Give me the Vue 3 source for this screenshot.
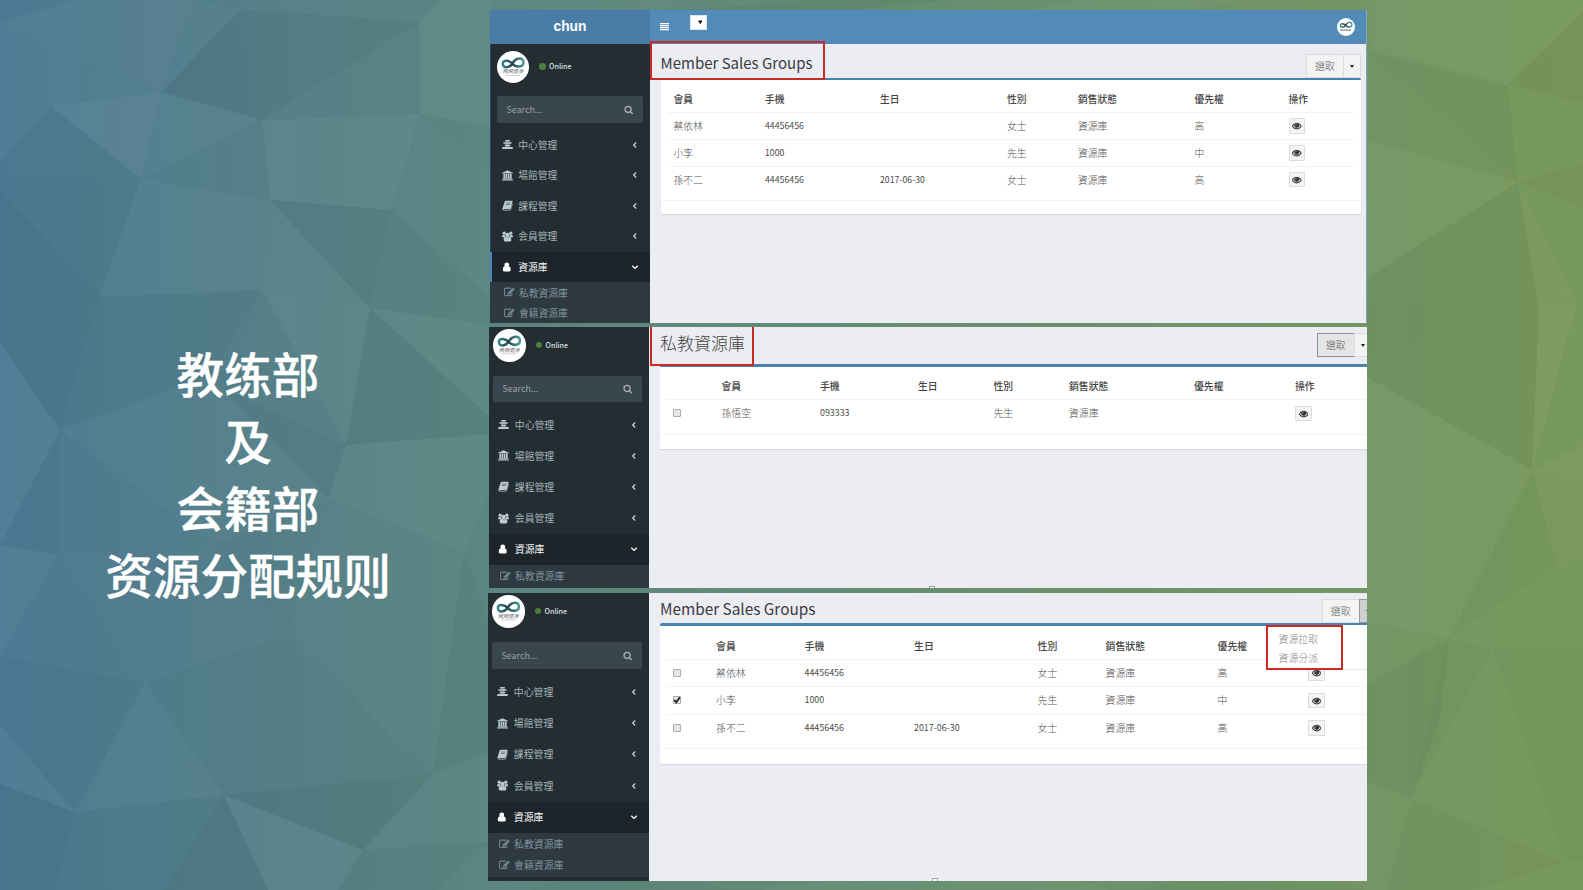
<script setup>
const menu = [
  { icon: 'center', label: '中心管理' },
  { icon: 'bank', label: '場館管理' },
  { icon: 'book', label: '課程管理' },
  { icon: 'users', label: '会員管理' },
  { icon: 'user', label: '資源庫', active: true },
]

const heads = ['會員', '手機', '生日', '性別', '銷售狀態', '優先權', '操作']
const members = [
  ['蔡依林', '44456456', '', '女士', '資源庫', '高'],
  ['小李', '1000', '', '先生', '資源庫', '中'],
  ['孫不二', '44456456', '2017-06-30', '女士', '資源庫', '高'],
]

const panels = [
  { id: 'p1', title: 'Member Sales Groups', bar: true, subs: ['私教資源庫', '會籍資源庫'], heads, rows: members, mark: true },
  {
    id: 'p2', title: '私教資源庫', subs: ['私教資源庫'], heads, checks: [false],
    rows: [['孫悟空', '093333', '', '先生', '資源庫', '']], mark: true, handle: true,
  },
  {
    id: 'p3', title: 'Member Sales Groups', subs: ['私教資源庫', '會籍資源庫'], heads: heads.slice(0, 6), checks: [false, true, false],
    rows: members, dropdown: ['資源拉取', '資源分派'], handle: true,
  },
]

const isLatin = (s) => /^[\d-]+$/.test(s)

const facets = [
  ['w', 0.05, '0,23 75,0 195,0 161,92'],
  ['w', 0.03, '195,0 241,9 161,92'],
  ['k', 0.05, '241,9 161,92 262,120'],
  ['k', 0.035, '241,9 419,22 262,120'],
  ['w', 0.02, '236,0 442,0 419,22 241,9'],
  ['w', 0.01, '262,120 419,22 420,114'],
  ['w', 0.06, '419,22 442,0 490,0 490,128 420,114'],
  ['w', 0.035, '0,23 161,92 51,106 0,162'],
  ['w', 0.08, '51,106 161,92 141,179'],
  ['w', 0.045, '161,92 262,120 141,179'],
  ['w', 0.01, '141,179 262,120 270,200'],
  ['w', 0.065, '262,120 420,114 391,210 270,200'],
  ['w', 0.03, '420,114 490,172 490,297 391,210'],
  ['k', 0.01, '51,106 141,179 0,176 0,162'],
  ['k', 0.02, '0,176 141,179 99,297 0,190'],
  ['k', 0.06, '0,190 99,297 0,303'],
  ['w', 0.045, '141,179 270,200 262,290 99,297'],
  ['k', 0.035, '270,200 391,210 370,308'],
  ['w', 0.055, '270,200 370,308 262,290'],
  ['k', 0.01, '391,210 490,297 490,325 370,308'],
  ['k', 0.025, '99,297 262,290 220,360 210,376 60,430'],
  ['k', 0.05, '0,303 99,297 60,430 0,343'],
  ['w', 0.045, '0,343 60,430 0,545'],
  ['w', 0.065, '262,290 370,308 346,445'],
  ['w', 0.01, '262,290 346,445 220,388'],
  ['k', 0.035, '370,308 490,417 490,434 346,445'],
  ['w', 0.055, '370,308 490,325 490,417'],
  ['w', 0.035, '60,430 210,376 280,445 328,498 213,545'],
  ['k', 0.035, '220,388 346,445 328,498'],
  ['k', 0.03, '60,430 58,555 0,545'],
  ['w', 0.055, '346,445 490,434 490,490 464,552 328,498'],
  ['w', 0.05, '0,545 58,555 0,656'],
  ['w', 0.015, '58,555 213,545 287,635 145,683'],
  ['w', 0.02, '328,498 464,552 433,774 287,635'],
  ['k', 0.03, '464,552 488,622 488,752 433,774'],
  ['k', 0.03, '0,656 145,683 75,812 0,725'],
  ['w', 0.035, '145,683 224,795 75,812'],
  ['k', 0.01, '145,683 287,635 433,774 224,795'],
  ['w', 0.035, '0,725 75,812 0,784'],
  ['k', 0.06, '0,784 75,812 56,890 0,890'],
  ['k', 0.02, '75,812 224,795 164,890 56,890'],
  ['k', 0.06, '224,795 164,890 268,890'],
  ['w', 0.05, '224,795 363,850 338,890 268,890'],
  ['k', 0.06, '224,795 433,774 363,850'],
  ['w', 0.03, '433,774 490,752 490,842 363,850'],
  ['k', 0.02, '363,850 490,842 437,890 338,890'],
  ['w', 0.03, '490,0 690,0 660,12 490,9'],
  ['k', 0.05, '660,12 820,0 950,0 830,12'],
  ['w', 0.04, '1080,0 1250,0 1180,12 1020,12'],
  ['k', 0.03, '560,881 690,881 730,890 530,890'],
  ['w', 0.04, '820,881 1080,881 1110,890 760,890'],
  ['k', 0.03, '1180,881 1340,881 1367,890 1140,890'],
  ['w', 0.03, '1367,0 1583,0 1583,12 1508,85 1371,51'],
  ['k', 0.04, '1371,51 1508,85 1518,182 '],
  ['k', 0.02, '1371,51 1518,182 1367,140'],
  ['k', 0.04, '1508,85 1583,12 1583,103'],
  ['k', 0.035, '1518,182 1583,164 1583,208'],
  ['w', 0.035, '1367,140 1518,182 1367,278'],
  ['k', 0.04, '1367,278 1518,182 1539,310 1367,297'],
  ['k', 0.055, '1367,297 1539,310 1367,355'],
  ['k', 0.04, '1367,355 1539,310 1532,470 1367,377'],
  ['w', 0.035, '1518,182 1577,302 1539,310'],
  ['w', 0.055, '1539,310 1577,302 1532,470'],
  ['w', 0.04, '1367,377 1532,470 1449,638 1367,622'],
  ['w', 0.05, '1532,470 1583,445 1583,483'],
  ['w', 0.025, '1532,470 1583,483 1583,558 1557,565'],
  ['k', 0.03, '1532,470 1557,565 1449,638'],
  ['k', 0.05, '1449,638 1367,684 1367,782 1411,798 1440,720'],
  ['k', 0.03, '1449,638 1493,648 1411,798'],
  ['k', 0.03, '1493,648 1583,648 1583,862 1564,862'],
  ['k', 0.035, '1411,798 1564,862 1480,890 1387,890'],
]
</script>

<template>
  <div class="slide">
    <svg class="backdrop" viewBox="0 0 1583 890">
      <defs>
        <linearGradient id="sky" x1="0" x2="1" y1="0" y2="0">
          <stop offset="0" stop-color="#4e7994" />
          <stop offset=".06" stop-color="#4f7b8f" />
          <stop offset=".15" stop-color="#537e89" />
          <stop offset=".3" stop-color="#5a8581" />
          <stop offset=".6" stop-color="#678e70" />
          <stop offset=".86" stop-color="#749665" />
          <stop offset="1" stop-color="#78995c" />
        </linearGradient>
        <linearGradient id="loop" x1="0" x2="1" y1="0" y2="0">
          <stop offset="0" stop-color="#2f8488" />
          <stop offset=".45" stop-color="#24454e" />
          <stop offset="1" stop-color="#4a9a98" />
        </linearGradient>
      </defs>
      <rect width="1583" height="890" fill="url(#sky)" />
      <polygon v-for="(f, i) in facets" :key="i" :points="f[2]" :fill="f[0] === 'w' ? '#fff' : '#000'" :fill-opacity="f[1] * 0.7" />
    </svg>

    <h1 class="caption">
      <span>教练部</span><span>及</span><span>会籍部</span><span>资源分配规则</span>
    </h1>

    <div class="stack">
      <section v-for="p in panels" :key="p.id" class="panel" :class="p.id">
        <header v-if="p.bar" class="topbar">
          <div class="brand">chun</div>
          <div class="nav">
            <svg class="burger" viewBox="0 0 9 8"><path d="M0 .6h9M0 2.600h9M0 4.600h9M0 6.600h9" stroke="#fff" stroke-width="1.100" /></svg>
            <span class="lang"><svg viewBox="0 0 5 5"><path d="M0 .5h5L2.500 4.800z" fill="#111" /></svg></span>
            <span class="user"><svg viewBox="0 0 32 32"><path d="M15.500 12.500C13 16.800 6 18 6 13.200 6 8.600 12.500 9.500 15.500 13 19 17.400 26.500 16.800 26.500 11.500 26.500 6.500 19 6.300 15.500 12.500z" fill="none" stroke="url(#loop)" stroke-width="2.600" /><path d="M6 21.500h20" stroke="#999" stroke-width="3" stroke-dasharray="4 1" /></svg></span>
          </div>
        </header>

        <div class="body">
          <aside class="side">
            <div class="me">
              <div class="logo">
                <svg viewBox="0 0 32 32">
                  <path d="M15.500 12.300C13 16.800 5.800 18 5.800 12.800 5.800 8.200 12.500 9.300 15.500 12.800 19 17 26.500 16.500 26.500 11.200 26.500 6.200 19 6.100 15.500 12.300z" fill="none" stroke="url(#loop)" stroke-width="2.500" />
                  <path d="M9 24.500h14" stroke="#c9b8b0" stroke-width=".7" />
                </svg>
                <em>飛飛健身</em>
              </div>
              <i class="dot"></i><b>Online</b>
            </div>
            <div class="search">
              <span>Search...</span>
              <svg viewBox="0 0 1792 1792"><path fill="#a5b0b5" d="M1216 832q0-185-131.500-316.500t-316.500-131.500-316.500 131.500-131.500 316.500 131.500 316.500 316.500 131.500 316.500-131.500 131.500-316.500zm512 832q0 52-38 90t-90 38q-54 0-90-38l-343-342q-179 124-399 124-143 0-273.500-55.500t-225-150-150-225-55.500-273.500 55.500-273.500 150-225 225-150 273.500-55.500 273.500 55.500 225 150 150 225 55.500 273.500q0 220-124 399l343 343q37 37 37 90z" /></svg>
            </div>
            <nav>
              <div v-for="m in menu" :key="m.icon" class="item" :class="{ active: m.active }">
                <svg class="ic" viewBox="0 0 12 12" fill="currentColor">
                  <g v-if="m.icon === 'center'"><path d="M3.500 1h5v1.700h-5zM1.600 3.600h8.800v1.700H1.600zM3 6.200h6v1.700H3zM.3 8.800h11.400v2H.3z" /><path opacity=".45" d="M4 2.700h4v6.200H4z" /></g>
                  <g v-else-if="m.icon === 'bank'"><path d="M6 .4l5.800 2.500v1H.2v-1zM1.500 4.300h1.900v4.400H1.500zM4 4.300h1.700v4.400H4zM6.300 4.300H8v4.400H6.300zM8.600 4.300h1.900v4.400H8.600zM.9 9h10.200v1H.9zM.1 10.300h11.800v1.200H.1z" /></g>
                  <g v-else-if="m.icon === 'book'"><path fill-rule="evenodd" d="M4 .8h7q.8.200.5 1.100L9.500 9q-.2.700-1 .7H2.200q-.7 0-.6.500t.7.500h6.200q.8 0 1-.8l1.900-6.200q.5.300.3 1l-1.900 5.900q-.3.900-1.200.9H2.200Q.3 11.400.5 9.300L2.800 2Q3.200.8 4 .8zM4.700 3l-.2.600h4.600l.2-.6zM4.200 4.800l-.2.600h4.500l.2-.6z" /></g>
                  <g v-else-if="m.icon === 'users'"><circle cx="2.400" cy="2.400" r="1.800" /><circle cx="9.600" cy="2.400" r="1.800" /><circle cx="6" cy="4.300" r="2.400" /><path d="M0 6.900q0-2.600 1.200-2.700l2 .4Q3.200 6 4 6.900zM12 6.900q0-2.600-1.200-2.700l-2 .4Q8.800 6 8 6.900zM1.800 9.800q0-3.400 2.200-3.500 2 1.200 4 0 2.200.1 2.200 3.500 0 1.600-1.500 1.600H3.300Q1.800 11.400 1.800 9.800z" /></g>
                  <g v-else><circle cx="6" cy="3.500" r="3.100" /><path d="M.9 9.500q0-3.700 2.500-4.300 2.600 2.400 5.200 0 2.500.6 2.500 4.300 0 2.100-1.800 2.100H2.700Q.9 11.600.9 9.500z" /></g>
                </svg>
                <span>{{ m.label }}</span>
                <svg class="chev" viewBox="0 0 8 8"><path :d="m.active ? 'M1.300 2.700L4 5.400l2.700-2.700' : 'M5.200 1.500L2.700 4l2.500 2.500'" fill="none" stroke="currentColor" stroke-width="1.300" /></svg>
              </div>
            </nav>
            <div class="subs">
              <div v-for="s in p.subs" :key="s" class="sub">
                <svg viewBox="0 0 1792 1792"><path fill="currentColor" stroke="currentColor" stroke-width="50" d="M888 1184l116-116-152-152-116 116v56h96v96h56zm440-720q-16-16-33 1l-350 350q-17 17-1 33t33-1l350-350q17-17 1-33zm80 594v190q0 119-84.500 203.500t-203.500 84.500h-832q-119 0-203.500-84.500t-84.500-203.500v-832q0-119 84.500-203.500t203.500-84.500h832q63 0 117 25 15 7 18 23 3 17-9 29l-49 49q-14 14-32 8-23-6-45-6h-832q-66 0-113 47t-47 113v832q0 66 47 113t113 47h832q66 0 113-47t47-113v-126q0-13 9-22l64-64q15-15 35-7t20 29zm-96-738l288 288-672 672h-288v-288zm444 132l-92 92-288-288 92-92q28-28 68-28t68 28l152 152q28 28 28 68t-28 68z" /></svg>
                <span>{{ s }}</span>
              </div>
            </div>
          </aside>

          <main class="main">
            <div class="head">
              <h2>{{ p.title }}</h2>
              <div class="btns">
                <button class="pick">選取</button>
                <button class="caret"><i></i></button>
              </div>
            </div>
            <div class="box">
              <div class="row th">
                <span v-if="p.checks"></span>
                <span v-for="h in p.heads" :key="h">{{ h }}</span>
              </div>
              <div v-for="(r, ri) in p.rows" :key="ri" class="row">
                <span v-if="p.checks" class="ck"><i><svg v-if="p.checks[ri]" viewBox="0 0 8 8"><path d="M1.300 4l1.900 2.200L6.900 1.200" fill="none" stroke="#222" stroke-width="1.800" /></svg></i></span>
                <span v-for="(c, ci) in r" :key="ci" :class="{ latin: isLatin(c) }">{{ c }}</span>
                <span class="eye"><svg viewBox="0 0 1792 1792"><path fill="#333" stroke="#333" stroke-width="60" d="M1664 960q-152-236-381-353 61 104 61 225 0 185-131.500 316.500t-316.500 131.500-316.500-131.500-131.500-316.500q0-121 61-225-229 117-381 353 133 205 333.500 326.500t434.500 121.500 434.500-121.500 333.500-326.500zm-720-384q0-20-14-34t-34-14q-125 0-214.500 89.500t-89.500 214.500q0 20 14 34t34 14 34-14 14-34q0-86 61-147t147-61q20 0 34-14t14-34zm848 384q0 34-20 69-140 230-376.500 368.500t-499.500 138.500-499.500-139-376.500-368q-20-35-20-69t20-69q140-229 376.500-368t499.500-139 499.500 139 376.500 368q20 35 20 69z" /></svg></span>
              </div>
              <div class="foot"></div>
            </div>
            <div v-if="p.dropdown" class="drop">
              <div class="dropin"><span v-for="d in p.dropdown" :key="d">{{ d }}</span></div>
            </div>
            <i v-if="p.mark" class="mark"></i>
            <i v-if="p.handle" class="handle"></i>
          </main>
        </div>
      </section>
    </div>
  </div>
</template>

<style>
body { margin: 0; overflow: hidden; }
</style>

<style scoped>
* { box-sizing: border-box; }
.slide {
  position: relative; display: flex; width: 1583px; height: 890px; overflow: hidden;
  font-family: "Noto Sans CJK TC", "Noto Sans", sans-serif;
}
.backdrop { position: absolute; inset: 0; width: 1583px; height: 890px; }
.caption {
  position: relative; width: 488px; flex: none; margin: 0; padding: 339px 0 0 8px;
  display: flex; flex-direction: column; align-items: center;
  font: 500 47.600px/67px "Noto Sans CJK SC", sans-serif; color: #fff; -webkit-text-stroke: .4px #fff;
}
.stack { position: relative; width: 879px; padding-top: 9.500px; display: flex; flex-direction: column; align-items: flex-end; }
.panel { display: flex; flex-direction: column; overflow: hidden; flex: none; background: #ecedf3; }
.p1 {
  width: 877px; height: 313.500px; margin-bottom: 4px; border-right: 1px solid #7fa3cb;
  --fs: 9.750px; --side: 160px; --me: 52.500px; --ml: 7px; --mt: 7px; --item: 30.600px; --sub: 20.500px; --nt: 6.800px;
  --padl: 10.500px; --headh: 34px; --bt: 2.500px; --pt: 7px; --thh: 25.500px; --rh: 26.900px; --lat: 8.750px; --tfs: 15px;
  --cols: 91.500px 115px 127px 71px 116.500px 94px 1fr; --boxr: 5px; --in: 7px; --ind: 6px; --fh: 14.500px;
  --logo: 32px; --dotx: 10px; --icx: 4.500px;
}
.p2 {
  width: 878px; height: 261px; margin-bottom: 5px;
  --fs: 9.850px; --side: 160px; --me: 48.500px; --ml: 4px; --mt: 2px; --item: 31.200px; --sub: 22px; --nt: 7px;
  --padl: 11px; --headh: 36.500px; --bt: 3px; --pt: 7px; --thh: 25.500px; --rh: 27.500px; --lat: 8.850px; --tfs: 17px;
  --cols: 48.500px 98.500px 98px 75.500px 75.500px 125px 101px 1fr; --boxr: 0px; --in: 7px; --ind: 6px; --fh: 15.500px;
  --logo: 32.500px; --dotx: 10px; --icx: 5px;
}
.p3 {
  width: 879px; height: 288px;
  --fs: 9.900px; --side: 161px; --me: 49px; --ml: 4px; --mt: 2px; --item: 31.400px; --sub: 21.700px; --nt: 7.500px;
  --padl: 11px; --headh: 29.500px; --bt: 3px; --pt: 7px; --thh: 26px; --rh: 27.600px; --lat: 8.900px; --tfs: 15.350px;
  --cols: 43px 88.500px 109.500px 123.500px 68px 112px 90.500px 1fr; --boxr: 0px; --in: 7px; --ind: 6px; --fh: 15.500px;
  --logo: 32.500px; --dotx: 10px; --icx: 5px;
}
.topbar { display: flex; height: 34px; flex: none; }
.brand { width: 160px; background: #497da8; color: #fff; font: bold 13.800px/33px "Liberation Sans", Arial, sans-serif; text-align: center; }
.nav { flex: 1; display: flex; align-items: flex-start; background: #528ab8; }
.burger { width: 9px; height: 8px; margin: 13px 0 0 10px; }
.lang { width: 16.500px; height: 15px; margin: 5.500px 0 0 21px; background: #fff; border: 1px solid #dfe5ea; display: flex; justify-content: flex-end; padding: 4px 3.500px 0 0; }
.lang svg { width: 4.500px; height: 4.500px; }
.user { width: 18px; height: 18px; border-radius: 50%; background: #fff; margin: 8px 11.500px 0 auto; }
.user svg { width: 18px; height: 18px; display: block; }

.body { flex: 1; display: flex; min-height: 0; }
.side { width: var(--side); flex: none; background: #242d32; color: #a6b4bb; font-size: var(--fs); overflow: hidden; }
.p1 .side { box-shadow: inset 1px 0 #1e4a6b; }
.me { height: var(--me); padding: var(--mt) 0 0 var(--ml); display: flex; align-items: flex-start; }
.logo { position: relative; width: var(--logo); height: var(--logo); border-radius: 50%; background: #fff; flex: none; }
.logo svg { display: block; width: 100%; height: 100%; }
.logo em { position: absolute; left: 0; width: 100%; top: 16.500px; text-align: center; font-size: 5.200px; line-height: 8px; color: #666; }
.dot { width: 6.500px; height: 6.500px; border-radius: 50%; background: #4a8040; margin: 12.500px 3.500px 0 var(--dotx); }
.me b { font-size: 7.200px; line-height: 12px; margin-top: 9.500px; color: #dde2e4; font-weight: 500; }
.search {
  margin: 0 7px 0 var(--ml); height: 26.500px; border-radius: 2px; background: #3a464d; color: #98a2a7;
  display: flex; align-items: center; justify-content: space-between; padding: 0 9.500px; font-size: 8.900px;
}
.search svg { width: 9.500px; height: 9.500px; }
nav { padding-top: var(--nt); }
.item { height: var(--item); display: flex; align-items: center; padding-left: calc(var(--ml) + var(--icx)); line-height: 14px; }
.ic { width: 11px; height: 11px; margin-right: 5.800px; color: #bccad1; }
.chev { width: 8px; height: 8px; margin: 0 11.500px 0 auto; color: #c4d0d6; }
.active { background: #1d252a; color: #f4f6f7; }
.active .ic, .active .chev { color: #fff; }
.active .ic { width: 9.500px; height: 10px; margin-right: 7.300px; }
.p1 .active { box-shadow: inset 2px 0 #4a86b8; }
.subs { background: #2e3940; color: #7d929c; height: 100%; }
.p3 .subs { height: 44px; }
.sub { height: var(--sub); display: flex; align-items: center; padding-left: calc(var(--ml) + 7px); }
.sub svg { width: 10.500px; height: 10.500px; margin-right: 4.500px; }

.main { position: relative; flex: 1; min-width: 0; padding-left: var(--padl); }
.head { height: var(--headh); display: flex; justify-content: space-between; }
h2 { margin: 0; font-weight: 400; font-size: var(--tfs); line-height: 24px; color: #3b3b3f; white-space: nowrap; }
.p1 h2 { padding-top: 7.500px; }
.p2 h2 { padding-top: 4px; font-weight: 300; color: #444; }
.p3 h2 { padding-top: 3px; }
.btns { display: flex; height: 24px; }
.p1 .btns { margin: 10.500px 5px 0 0; }
.p2 .btns { margin: 6px -5px 0 0; }
.p3 .btns { margin: 6px -10px 0 0; }
button { font-family: inherit; font-size: var(--fs); padding: 0; border: 1px solid #dcdcdf; background: #f3f3f4; color: #5c5c5c; font-weight: 300; height: 24px; }
.pick { width: 38px; }
.caret { width: 18px; margin-left: -1px; display: flex; align-items: center; justify-content: center; }
.caret i { border: 2.600px solid transparent; border-top: 3px solid #222; border-bottom: 0; }
.p2 .pick { background: #e5e5e6; border-color: #8e8e92; width: 38.500px; }
.p3 .pick { width: 38.500px; }
.p3 .caret { background: #cfcfd1; border-color: #9a9a9e; }
.box {
  margin-right: var(--boxr); border-top: var(--bt) solid #4883ae; background: #fff; padding-top: var(--pt);
  border-radius: 2px; box-shadow: 0 1px 1px #d3d5dc;
}
.p2 .box, .p3 .box { border-radius: 2px 0 0 2px; }
.row {
  display: grid; grid-template-columns: var(--cols); align-items: center; height: var(--rh);
  margin: 0 0 0 var(--in); padding-left: var(--ind); border-top: 1px solid #f3f3f3;
  font-size: var(--fs); font-weight: 300; color: #505050; line-height: 14px; white-space: nowrap;
}
.p1 .row { margin-right: 7px; }
.th { height: var(--thh); border-top: 0; font-weight: 500; color: #444; }
.latin { font-size: var(--lat); font-weight: 400; color: #4a4a4a; }
.ck i { display: block; width: 8px; height: 8px; border: 1px solid #aaa; border-radius: 1px; background: #e6e6e8; }
.ck svg { display: block; width: 8px; height: 8px; margin: -1px; }
.eye { width: 16.500px; height: 15.500px; border: 1px solid #dcdcdc; background: #f4f4f4; border-radius: 1px; display: flex; align-items: center; justify-content: center; }
.eye svg { width: 9.500px; height: 9.500px; }
.foot { margin-top: 7px; height: var(--fh); border-top: 1px solid #f3f3f3; }
.mark { position: absolute; border: 2px solid #c92a24; }
.p1 .mark { left: 0; top: -3px; width: 175px; height: 39px; }
.p2 .mark { left: 1px; top: -4px; width: 104px; height: 43px; }
.drop {
  position: absolute; left: 617px; top: 32px; right: 0; height: 45px; background: #fff; border-bottom: 1px solid #eaeaea;
}
.dropin { width: 77px; height: 45px; border: 2px solid #c92a24; padding: 3px 0 0 10.500px; display: flex; flex-direction: column; font-size: var(--fs); font-weight: 300; line-height: 18.500px; color: #888; }
.handle { position: absolute; width: 6px; height: 4px; border: 1px solid #9aa3ad; background: #fff; bottom: -2px; }
.p2 .handle { left: 280px; }
.p3 .handle { left: 283px; bottom: -1px; }
</style>
